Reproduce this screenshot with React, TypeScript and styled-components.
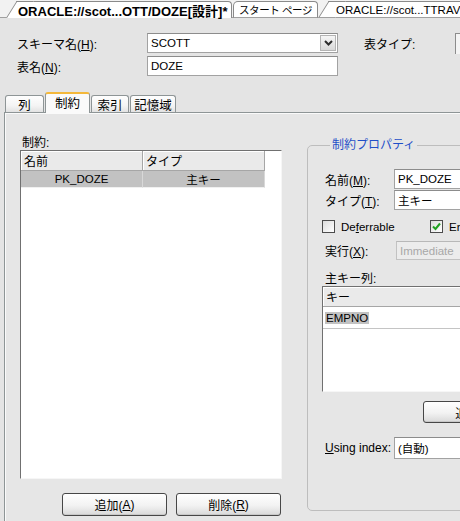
import styled, { createGlobalStyle, css } from 'styled-components';

const GlobalStyle = createGlobalStyle`
  html, body {
    margin: 0;
    padding: 0;
    background: #e4e4e4;
  }
  body {
    font-family: "Liberation Sans", "Noto Sans CJK JP", sans-serif;
    font-size: 12px;
    color: #000;
  }
`;

const Frame = styled.div`
  width: 460px;
  height: 521px;
  overflow: hidden;
  background: #e4e4e4;
  display: flex;
  flex-direction: column;
`;

/* ---- editor tabs at the top ---- */

const DocTabs = styled.div`
  flex: none;
  height: 18px;
  box-sizing: border-box;
  display: flex;
  align-items: flex-end;
  padding-left: 16px;
  background: #f2f2f2;
  border-bottom: 1px solid #a0a0a0;
  white-space: nowrap;
`;

const DocTab = styled.div<{ $active?: boolean; $slant?: boolean; $w: number; $pad: number }>`
  position: relative;
  z-index: 0;
  flex: none;
  width: ${(p) => p.$w}px;
  height: 17px;
  margin-bottom: -1px;
  box-sizing: border-box;
  display: flex;
  align-items: center;
  overflow: visible;
  margin-left: ${(p) => (p.$slant && !p.$active ? '10px' : '1px')};
  padding-left: ${(p) => p.$pad}px;
  background: #fff;
  border-top: 1px solid #8a8a8a;
  border-right: 1px solid #8a8a8a;
  border-left: ${(p) => (p.$slant ? 'none' : '1px solid #8a8a8a')};
  border-bottom: ${(p) => (p.$active ? 'none' : '1px solid #a0a0a0')};
  border-radius: ${(p) => (p.$slant ? '0 4px 0 0' : '5px 4px 0 0')};
  font-size: ${(p) => (p.$active ? '13px' : '11.5px')};
  font-weight: ${(p) => (p.$active ? 700 : 400)};
  ${(p) =>
    p.$active &&
    css`
      margin-left: 0;
    `}
  ${(p) =>
    p.$slant &&
    css`
      &::before {
        content: '';
        position: absolute;
        z-index: -1;
        left: -10px;
        top: -1px;
        bottom: ${p.$active ? '0' : '-1px'};
        width: 16px;
        background: #fff;
        border-left: 1px solid #8a8a8a;
        border-top: 1px solid #8a8a8a;
        border-bottom: ${p.$active ? 'none' : '1px solid #a0a0a0'};
        transform: skewX(-32deg);
        transform-origin: bottom left;
      }
    `}
`;

const TabText = styled.span<{ $size?: number }>`
  font-size: ${(p) => (p.$size ? `${p.$size}px` : 'inherit')};
  letter-spacing: ${(p) => (p.$size ? '-0.4px' : 'normal')};
`;

/* ---- form above the inner tabs ---- */

const Form = styled.div`
  flex: none;
  display: flex;
  flex-direction: column;
  gap: 3px;
  padding: 15px 0 0 17px;
`;

const FormRow = styled.div`
  display: flex;
  align-items: center;
  height: 20px;
`;

const Label = styled.span<{ $w?: number; $ml?: number }>`
  flex: none;
  width: ${(p) => (p.$w ? `${p.$w}px` : 'auto')};
  margin-left: ${(p) => p.$ml ?? 0}px;
  white-space: nowrap;
`;

const TextBox = styled.div<{ $w: number; $disabled?: boolean }>`
  flex: none;
  position: relative;
  width: ${(p) => p.$w}px;
  height: 100%;
  box-sizing: border-box;
  display: flex;
  align-items: center;
  padding-left: 3px;
  background: ${(p) => (p.$disabled ? '#ececec' : '#fff')};
  border: 1px solid ${(p) => (p.$disabled ? '#c2c2c2' : '#a2a2a2')};
  border-top-color: ${(p) => (p.$disabled ? '#b8b8b8' : '#8c8c8c')};
  color: ${(p) => (p.$disabled ? '#a8a8a8' : '#000')};
  font-size: 11.5px;
  white-space: nowrap;
`;

const DropButton = styled.div`
  position: absolute;
  right: 1px;
  top: 1px;
  bottom: 1px;
  width: 16px;
  box-sizing: border-box;
  display: flex;
  align-items: center;
  justify-content: center;
  border: 1px solid #b4b4b4;
  background: linear-gradient(#f6f6f6, #d8d8d8);
`;

const EdgeBox = styled.div`
  margin-left: auto;
  width: 4px;
  height: 20px;
  border-left: 1px solid #8c8c8c;
  border-top: 1px solid #8c8c8c;
  background: #f4f4f4;
`;

/* ---- inner tabs ---- */

const SubTabs = styled.div`
  flex: none;
  position: relative;
  z-index: 1;
  height: 20px;
  margin-top: 16px;
  padding-left: 5px;
  display: flex;
  align-items: flex-end;
  gap: 1px;
`;

const SubTab = styled.div<{ $active?: boolean; $w: number }>`
  flex: none;
  width: ${(p) => p.$w}px;
  height: ${(p) => (p.$active ? '21px' : '17px')};
  margin-bottom: ${(p) => (p.$active ? '-1px' : '0')};
  box-sizing: border-box;
  display: flex;
  align-items: center;
  justify-content: center;
  border: 1px solid #8e9596;
  border-bottom: none;
  border-radius: 3px 3px 0 0;
  background: ${(p) => (p.$active ? '#fafafa' : 'linear-gradient(#fefefe, #f4f4f4 60%, #e2e2e2)')};
  ${(p) =>
    p.$active &&
    css`
      border-top: 2px solid #f4b83a;
      padding-bottom: 2px;
    `}
  font-size: 12.5px;
`;

const Panel = styled.div`
  flex: 1;
  display: flex;
  margin-left: 4px;
  padding: 23px 0 0 15px;
  background: #e6e6e6;
  border-top: 1px solid #8e9596;
  border-left: 1px solid #8e9596;
  box-shadow: inset 1px 1px 0 #fafafa;
`;

/* ---- left: constraint list ---- */

const LeftPane = styled.div`
  flex: none;
  width: 262px;
  display: flex;
  flex-direction: column;
`;

const Caption = styled.div`
  height: 14px;
  line-height: 14px;
  padding-left: 2px;
`;

const ListBox = styled.div<{ $h: number; $w?: number }>`
  flex: none;
  width: ${(p) => (p.$w ? `${p.$w}px` : 'auto')};
  height: ${(p) => p.$h}px;
  box-sizing: border-box;
  background: #fff;
  border: 1px solid;
  border-color: #707070 #f6f6f6 #f6f6f6 #707070;
`;

const GridHead = styled.div<{ $cols: string }>`
  display: grid;
  grid-template-columns: ${(p) => p.$cols};
  height: 20px;
`;

const HeadCell = styled.div`
  display: flex;
  align-items: center;
  padding-left: 3px;
  background: #eaeaea;
  border-right: 1px solid #a6a6a6;
  border-bottom: 1px solid #a6a6a6;
  box-shadow: inset 1px 1px 0 #fff;
`;

const GridRow = styled.div<{ $cols: string }>`
  display: grid;
  grid-template-columns: ${(p) => p.$cols};
  height: 17px;
`;

const RowCell = styled.div`
  display: flex;
  align-items: center;
  justify-content: center;
  background: #c2c2c2;
  border-right: 1px solid #d8d8d8;
  border-bottom: 1px solid #f0f0f0;
  font-size: 11.5px;
`;

const ButtonBar = styled.div`
  display: flex;
  justify-content: flex-end;
  gap: 9px;
  margin-top: 14px;
  padding-right: 1px;
`;

const Button = styled.div<{ $w?: number }>`
  flex: none;
  width: ${(p) => p.$w ?? 105}px;
  height: 23px;
  box-sizing: border-box;
  display: flex;
  align-items: center;
  justify-content: center;
  border: 1px solid #474747;
  border-radius: 3px;
  background: linear-gradient(#ffffff, #f2f2f2 55%, #d9d9d9);
  box-shadow: inset 0 -1px 0 #c8c8c8;
  white-space: nowrap;
`;

/* ---- right: properties group ---- */

const Group = styled.fieldset`
  flex: none;
  width: 220px;
  height: 373px;
  box-sizing: border-box;
  margin: 2px 0 0 25px;
  padding: 17px 0 0 17px;
  border: 1px solid #bdbdbd;
  border-radius: 5px;
  display: flex;
  flex-direction: column;
`;

const Legend = styled.legend`
  margin-left: 5px;
  padding: 0 2px;
  line-height: 14px;
  color: #1f4fc8;
`;

const PropRow = styled.div<{ $mt?: number; $h?: number }>`
  display: flex;
  align-items: center;
  height: ${(p) => p.$h ?? 20}px;
  margin-top: ${(p) => p.$mt ?? 0}px;
`;

const CheckRow = styled.div`
  display: flex;
  align-items: center;
  height: 13px;
  margin: 10px 0 0 -3px;
`;

const CheckItem = styled.label<{ $w?: number }>`
  flex: none;
  width: ${(p) => (p.$w ? `${p.$w}px` : 'auto')};
  display: flex;
  align-items: center;
  gap: 6px;
  font-size: 11.5px;
  white-space: nowrap;
`;

const CheckBox = styled.span`
  flex: none;
  width: 13px;
  height: 13px;
  box-sizing: border-box;
  display: flex;
  align-items: center;
  justify-content: center;
  border: 1px solid #4c4c4c;
  background: linear-gradient(135deg, #dcdcdc, #ffffff);
`;

const SubCaption = styled.div`
  height: 14px;
  line-height: 14px;
  margin-top: 12px;
`;

const KeyGrid = styled(ListBox)`
  margin-left: -3px;
`;

const KeyRow = styled.div`
  height: 21px;
  display: flex;
  align-items: center;
  padding-left: 2px;
  border-bottom: 1px solid #c4c4c4;
  font-size: 11.5px;
`;

const Selected = styled.span`
  background: #c2c2c2;
  padding: 0 1px;
`;

const SideButton = styled(Button)`
  margin: 9px 0 0 98px;
  height: 22px;
`;

const U = styled.span`
  text-decoration: underline;
`;

function Chevron() {
  return (
    <svg width="9" height="6" viewBox="0 0 9 6">
      <path d="M1 1 L4.5 4.5 L8 1" fill="none" stroke="#2c2c2c" strokeWidth="2" />
    </svg>
  );
}

function Check() {
  return (
    <svg width="9" height="9" viewBox="0 0 9 9">
      <path d="M1 4.5 L3.5 7 L8 1.5" fill="none" stroke="#21a121" strokeWidth="2" />
    </svg>
  );
}

export default function App() {
  const listCols = '122px 122px';
  return (
    <>
      <GlobalStyle />
      <Frame>
        <DocTabs>
          <DocTab $active $slant $w={216} $pad={2}>
            ORACLE://scot...OTT/DOZE[設計]*
          </DocTab>
          <DocTab $w={85} $pad={5}>
            <TabText $size={10.5}>スタート ページ</TabText>
          </DocTab>
          <DocTab $slant $w={200} $pad={8}>
            ORACLE://scot...TTRAV
          </DocTab>
        </DocTabs>

        <Form>
          <FormRow>
            <Label $w={130}>
              スキーマ名(<U>H</U>):
            </Label>
            <TextBox $w={191}>
              SCOTT
              <DropButton>
                <Chevron />
              </DropButton>
            </TextBox>
            <Label $ml={26}>表タイプ:</Label>
            <EdgeBox />
          </FormRow>
          <FormRow>
            <Label $w={130}>
              表名(<U>N</U>):
            </Label>
            <TextBox $w={191}>DOZE</TextBox>
          </FormRow>
        </Form>

        <SubTabs>
          <SubTab $w={39}>列</SubTab>
          <SubTab $w={45} $active>
            制約
          </SubTab>
          <SubTab $w={38}>索引</SubTab>
          <SubTab $w={46}>記憶域</SubTab>
        </SubTabs>

        <Panel>
          <LeftPane>
            <Caption>制約:</Caption>
            <ListBox $h={329}>
              <GridHead $cols={listCols}>
                <HeadCell>名前</HeadCell>
                <HeadCell>タイプ</HeadCell>
              </GridHead>
              <GridRow $cols={listCols}>
                <RowCell>PK_DOZE</RowCell>
                <RowCell>主キー</RowCell>
              </GridRow>
            </ListBox>
            <ButtonBar>
              <Button>
                追加(<U>A</U>)
              </Button>
              <Button>
                削除(<U>R</U>)
              </Button>
            </ButtonBar>
          </LeftPane>

          <Group>
            <Legend>制約プロパティ</Legend>
            <PropRow>
              <Label $w={69}>
                名前(<U>M</U>):
              </Label>
              <TextBox $w={120}>PK_DOZE</TextBox>
            </PropRow>
            <PropRow $mt={1}>
              <Label $w={69}>
                タイプ(<U>T</U>):
              </Label>
              <TextBox $w={120}>主キー</TextBox>
            </PropRow>
            <CheckRow>
              <CheckItem $w={108}>
                <CheckBox />
                <span>
                  De<U>f</U>errable
                </span>
              </CheckItem>
              <CheckItem>
                <CheckBox>
                  <Check />
                </CheckBox>
                <span>Enabled</span>
              </CheckItem>
            </CheckRow>
            <PropRow $mt={8} $h={19}>
              <Label $w={71}>
                実行(<U>X</U>):
              </Label>
              <TextBox $w={120} $disabled>
                Immediate
              </TextBox>
            </PropRow>
            <SubCaption>主キー列:</SubCaption>
            <KeyGrid $h={106} $w={200}>
              <GridHead $cols="1fr">
                <HeadCell>キー</HeadCell>
              </GridHead>
              <KeyRow>
                <Selected>EMPNO</Selected>
              </KeyRow>
            </KeyGrid>
            <SideButton>追加(D)</SideButton>
            <PropRow $mt={14} $h={22}>
              <Label $w={69}>
                <U>U</U>sing index:
              </Label>
              <TextBox $w={120}>(自動)</TextBox>
            </PropRow>
          </Group>
        </Panel>
      </Frame>
    </>
  );
}
